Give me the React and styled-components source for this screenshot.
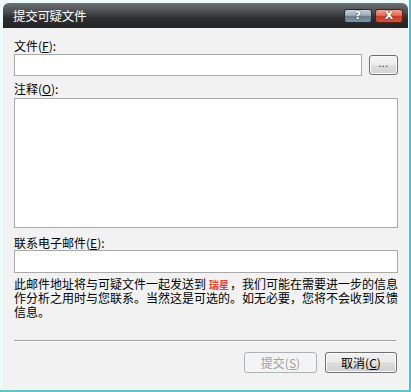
import React from "react";
import styled, { createGlobalStyle } from "styled-components";

const Global = createGlobalStyle`
  html, body { margin: 0; padding: 0; background: #ffffff; }
  * { box-sizing: border-box; }
`;

const font = `"Noto Sans CJK SC", "Noto Sans", sans-serif`;

const Outer = styled.div`
  width: 411px;
  height: 392px;
  background: #eefbfb;
  padding: 3px 0 0 3px;
  border-right: 2px solid #36c7ea;
  border-bottom: 2px solid #62c3c8;
  display: flex;
  flex-direction: column;
  font-family: ${font};
  font-size: 12px;
  color: #000;
`;

const Win = styled.div`
  width: 405px;
  height: 386px;
  display: flex;
  flex-direction: column;
  border-radius: 6px 6px 0 0;
  overflow: hidden;
  background: #f2f2f2;
`;

const TitleBar = styled.div`
  height: 25px;
  flex: none;
  display: flex;
  align-items: center;
  padding: 0 5px 0 10px;
  background: linear-gradient(to bottom, #6f7275 0%, #4b4e51 35%, #2c2e30 60%, #222426 100%);
`;

const Title = styled.div`
  flex: 1;
  color: #ffffff;
  font-size: 12.5px;
  letter-spacing: -0.3px;
  line-height: 14px;
  margin-top: 1px;
`;

const CapButton = styled.div`
  width: 28px;
  height: 14px;
  margin-top: 1px;
  border-radius: 3px;
  border: 1px solid ${p => (p.$close ? "#5a1d14" : "#232c33")};
  background: ${p =>
    p.$close
      ? "linear-gradient(to bottom, #f3a595 0%, #e66a55 45%, #c93a25 55%, #d8553e 100%)"
      : "linear-gradient(to bottom, #c9d5de 0%, #98aab8 45%, #687c8c 55%, #8095a5 100%)"};
  color: #fff;
  font-family: "DejaVu Sans", sans-serif;
  font-weight: bold;
  font-size: 11px;
  line-height: 12px;
  text-align: center;
  text-shadow: 0 0 2px #222;
  & + & { margin-left: 3px; }
`;

const Body = styled.div`
  flex: 1;
  display: flex;
  flex-direction: column;
  padding: 11px 10px 0 11px;
`;

const Label = styled.div`
  line-height: 14px;
  height: 14px;
  margin-bottom: ${p => p.$mb ?? 1}px;
`;

const Key = styled.span`
  text-decoration: underline;
`;

const Row = styled.div`
  display: flex;
  align-items: center;
  gap: 7px;
  margin-bottom: 6px;
`;

const Input = styled.div`
  flex: ${p => (p.$grow ? 1 : "none")};
  width: ${p => (p.$grow ? "auto" : "384px")};
  height: ${p => p.$h}px;
  background: #ffffff;
  border: 1px solid #a9a9a9;
  margin-bottom: ${p => p.$mb || 0}px;
`;

const Browse = styled.div`
  width: 29px;
  height: 20px;
  border: 1px solid #707070;
  border-radius: 3px;
  background: linear-gradient(to bottom, #f6f6f6 0%, #ececec 48%, #dddddd 52%, #d4d4d4 100%);
  box-shadow: inset 0 0 0 1px #fbfbfb;
  font-size: 10px;
  line-height: 13px;
  text-align: center;
  color: #222;
  letter-spacing: 0.5px;
`;

const Info = styled.div`
  white-space: nowrap;
  margin-top: 4px;
  display: flex;
  flex-direction: column;
`;

const InfoLine = styled.div`
  height: 14px;
  line-height: 14px;
`;

const Brand = styled.span`
  color: #e8402e;
  font-weight: bold;
  font-size: 10px;
  margin: 0 1px 0 3px;
`;

const Sep = styled.div`
  height: 1px;
  background: #a0a0a0;
  width: 382px;
  margin-top: 21px;
  border-bottom: 1px solid #ffffff;
  box-sizing: content-box;
`;

const Buttons = styled.div`
  display: flex;
  justify-content: flex-end;
  gap: 8px;
  margin-top: 10px;
  padding-right: 1px;
`;

const Btn = styled.div`
  width: ${p => p.$w}px;
  height: 21px;
  border-radius: 3px;
  border: 1px solid ${p => (p.$disabled ? "#adb2b5" : "#707070")};
  background: ${p =>
    p.$disabled
      ? "#f4f4f4"
      : "linear-gradient(to bottom, #f2f2f2 0%, #ebebeb 48%, #dddddd 52%, #cfcfcf 100%)"};
  box-shadow: ${p => (p.$disabled ? "none" : "inset 0 0 0 1px #fcfcfc")};
  color: ${p => (p.$disabled ? "#a0a0a0" : "#000")};
  text-align: center;
  line-height: 19px;
`;

export default function App() {
  return (
    <>
      <Global />
      <Outer>
        <Win>
          <TitleBar>
            <Title>提交可疑文件</Title>
            <CapButton>?</CapButton>
            <CapButton $close>X</CapButton>
          </TitleBar>
          <Body>
            <Label>文件(<Key>F</Key>):</Label>
            <Row>
              <Input $grow $h={22} />
              <Browse>...</Browse>
            </Row>
            <Label $mb={2}>注释(<Key>O</Key>):</Label>
            <Input $h={130} $mb={8} />
            <Label $mb={0}>联系电子邮件(<Key>E</Key>):</Label>
            <Input $h={23} />
            <Info>
              <InfoLine>
                此邮件地址将与可疑文件一起发送到<Brand>瑞星</Brand>，我们可能在需要进一步的信息
              </InfoLine>
              <InfoLine>作分析之用时与您联系。当然这是可选的。如无必要，您将不会收到反馈</InfoLine>
              <InfoLine>信息。</InfoLine>
            </Info>
            <Sep />
            <Buttons>
              <Btn $w={73} $disabled>提交(<Key>S</Key>)</Btn>
              <Btn $w={72}>取消(<Key>C</Key>)</Btn>
            </Buttons>
          </Body>
        </Win>
      </Outer>
    </>
  );
}
